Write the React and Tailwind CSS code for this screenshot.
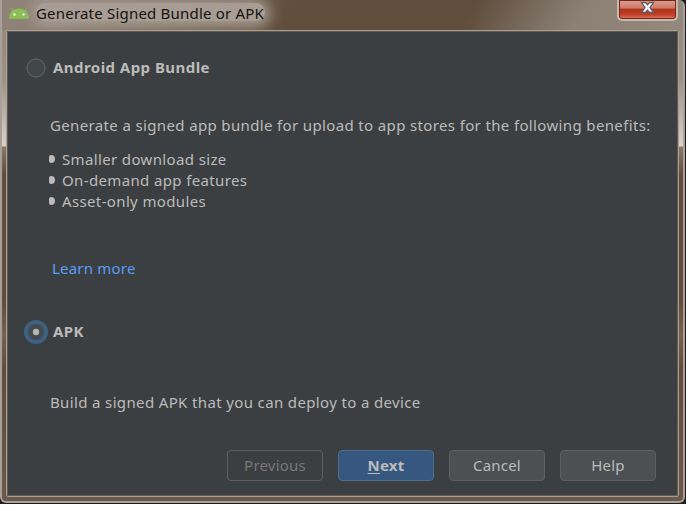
import React from "react";

function AndroidIcon() {
  return (
    <svg className="block h-[14px] w-[22px]" viewBox="0 0 22 14">
      <path d="M3 1.500 5.500 5M19 1.500 16.500 5" stroke="#8fb95a" strokeWidth="1" />
      <path d="M1 12.800C1.200 6 5.500 2.500 11 2.500S20.800 6 21 12.800Z" fill="#8cc152" />
      <circle cx="6.500" cy="8.500" r="1.200" fill="#eef5e2" />
      <circle cx="15.500" cy="8.500" r="1.200" fill="#eef5e2" />
    </svg>
  );
}

function TitleBar() {
  return (
    <header className="flex h-[30px] shrink-0 items-start bg-[linear-gradient(120deg,#8f8379_0%,#8f8379_3%,#79695b_24%,#604d3b_43%,#604d3b_68%,#75675a_76%,#8c8075_84%,#95897e_100%)] pl-[6px]">
      <div className="mt-[6px]">
        <AndroidIcon />
      </div>
      <h1 className="ml-[6px] mt-[3px] h-[21px] w-[229px] whitespace-nowrap text-[15px] leading-[20px] tracking-[0.2px] text-[#151311]">
        <span className="block h-[18px] rounded-full bg-[#a79d94] leading-[20px] shadow-[0_1px_14px_5px_#a79d94]">
          Generate Signed Bundle or APK
        </span>
      </h1>
      <button className="ml-auto mr-[5px] flex h-[21px] w-[61px] items-start justify-center rounded-b-[5px] border-x-2 border-b-2 border-[#c8b9b0] bg-[linear-gradient(#dba092_0%,#cc7967_44%,#b2301a_46%,#bd3d24_75%,#e07a5c_100%)] shadow-[inset_0_0_0_1px_#74291c]">
        <svg className="h-[15px] w-[17px]" viewBox="0 0 17 15">
          <path
            d="M2.500 2.500H6.500L8.500 4.800 10.500 2.500H14.500L11 7.500 14.500 12.500H10.500L8.500 10.200 6.500 12.500H2.500L6 7.500Z"
            fill="#f5f5f5"
            stroke="#5f5a61"
            strokeWidth="1.300"
          />
        </svg>
      </button>
    </header>
  );
}

function Radio({ checked }) {
  return checked ? (
    <svg className="h-6 w-6 shrink-0" viewBox="0 0 24 24">
      <circle cx="12" cy="12" r="10" fill="#43494a" stroke="#3d6185" strokeWidth="4" />
      <circle cx="12" cy="12" r="3.200" fill="#b5b5b5" />
    </svg>
  ) : (
    <svg className="h-6 w-6 shrink-0" viewBox="0 0 24 24">
      <circle cx="12" cy="12" r="9" fill="#414748" stroke="#65686a" />
    </svg>
  );
}

const base =
  "flex h-[31px] w-[96px] items-center justify-center rounded-[4px] border pb-[2px] text-[15px] leading-[20px] tracking-[0.2px]";

export default function App() {
  return (
    <div className="h-[511px] w-[693px] overflow-hidden bg-white font-['Noto_Sans','Noto_Sans_CJK_SC',sans-serif]">
      <div className="h-[504px] w-[686px] bg-[#1b1d20] pb-px pr-px">
        <div className="flex h-[503px] w-[685px] flex-col overflow-hidden rounded-b-[6px] rounded-tr-[6px] border-b-2 border-l-2 border-r-2 border-[#aaa09a] bg-[linear-gradient(#93877c_0px,#9d9288_80px,#d8d2cc_146px,#8c7868_147px,#604d3b_175px,#604d3b_300px,#75634d_335px,#604d3b_370px,#6b5a4c_503px)]">
          <TitleBar />
          <div className="ml-[4px] mr-[4px] flex h-[467px] flex-col rounded-[2px] border border-[#a89d92] bg-[#3c3f41]">
            <main className="flex h-full flex-col border border-[#645b53] pl-px pt-px text-[15px] leading-[21px] tracking-[0.36px] text-[#bbbbbb]">
              <label className="ml-[15px] mt-[23px] flex h-6 items-center gap-[5px] font-bold tracking-[0.45px]">
                <Radio />
                <span className="pb-[2px]">Android App Bundle</span>
              </label>
              <p className="ml-[41px] mt-[35px] whitespace-nowrap">
                Generate a signed app bundle for upload to app stores for the following benefits:
              </p>
              <ul className="ml-[40px] mt-[13px]">
                {["Smaller download size", "On-demand app features", "Asset-only modules"].map((item) => (
                  <li key={item} className="flex h-[21px] items-center">
                    <span className="mb-[2px] mr-[7px] h-[8px] w-[6px] rounded-l-[2px] rounded-r-[4px] bg-[#bbbbbb]" />
                    {item}
                  </li>
                ))}
              </ul>
              <a className="ml-[43px] mt-[46px] w-fit tracking-[0.2px] text-[#589df6]">Learn more</a>
              <label className="ml-[15px] mt-[41px] flex h-6 items-center gap-[5px] font-bold">
                <Radio checked />
                <span className="pb-[2px]">APK</span>
              </label>
              <p className="ml-[41px] mt-[48px] whitespace-nowrap">
                Build a signed APK that you can deploy to a device
              </p>
              <footer className="mb-[14px] mr-[21px] mt-auto flex justify-end gap-[15px]">
                <button className={`${base} border-[#5e6060] text-[#777777]`}>Previous</button>
                <button className={`${base} border-[#4c708c] bg-[#365880] font-bold`}>
                  <span className="underline underline-offset-2">N</span>ext
                </button>
                <button className={`${base} border-[#5e6060] bg-[#4c5052]`}>Cancel</button>
                <button className={`${base} border-[#5e6060] bg-[#4c5052]`}>Help</button>
              </footer>
            </main>
          </div>
        </div>
      </div>
    </div>
  );
}
